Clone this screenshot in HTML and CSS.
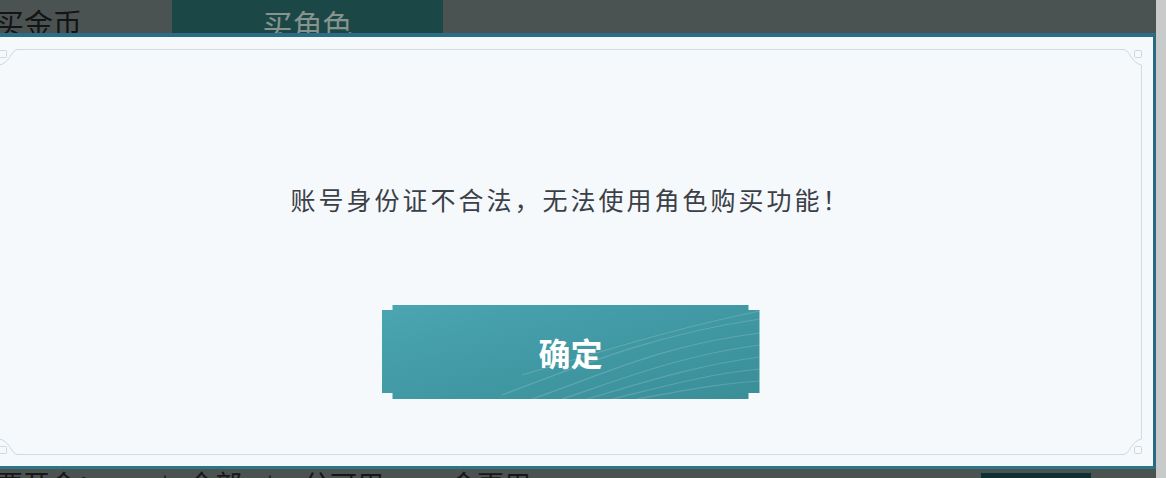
FILE: index.html
```html
<!DOCTYPE html>
<html lang="zh-CN">
<head>
    <meta charset="UTF-8">
    <title>买角色</title>
    <link rel="stylesheet" href="styles.css">
</head>
<body>
    <div class="page">
        <div class="main">
            <div class="tabs">
                <div class="tab">买金币</div>
                <div class="tab tab-active">买角色</div>
            </div>
            <div class="content"></div>
            <div class="filters">
                <span class="filter-label">要开会：</span>
                <span class="sep sep-first">|</span>
                <span class="filter filter-all">全部</span>
                <span class="sep">|</span>
                <span class="filter filter-a">分可用</span>
                <span class="filter filter-b">会更用</span>
                <span class="filter-btn"></span>
            </div>
        </div>
        <div class="scrollbar"></div>

        <div class="dialog">
            <div class="frame">
                <svg class="corner corner-tl" viewBox="0 0 22 18"><path d="M0.5 18 L0.5 16 C5 15 8 12 10.5 8.5 C13 5 15 0.5 19 0.5 L22 0.5"/><rect x="0.5" y="1.5" width="7" height="7" rx="1"/></svg>
                <svg class="corner corner-tr" viewBox="0 0 22 18"><path d="M0.5 18 L0.5 16 C5 15 8 12 10.5 8.5 C13 5 15 0.5 19 0.5 L22 0.5"/><rect x="0.5" y="1.5" width="7" height="7" rx="1"/></svg>
                <svg class="corner corner-bl" viewBox="0 0 22 18"><path d="M0.5 18 L0.5 16 C5 15 8 12 10.5 8.5 C13 5 15 0.5 19 0.5 L22 0.5"/><rect x="0.5" y="1.5" width="7" height="7" rx="1"/></svg>
                <svg class="corner corner-br" viewBox="0 0 22 18"><path d="M0.5 18 L0.5 16 C5 15 8 12 10.5 8.5 C13 5 15 0.5 19 0.5 L22 0.5"/><rect x="0.5" y="1.5" width="7" height="7" rx="1"/></svg>

                <p class="message">账号身份证不合法，无法使用角色购买功能！</p>

                <button class="confirm">
                    <svg class="waves" viewBox="0 0 378 94" preserveAspectRatio="none">
                        <path d="M150 94 C220 70 280 40 378 28"/>
                        <path d="M180 94 C240 74 300 50 378 40"/>
                        <path d="M205 94 C260 78 315 60 378 52"/>
                        <path d="M230 94 C280 82 330 68 378 64"/>
                        <path d="M120 90 C200 60 270 30 378 14"/>
                        <path d="M255 94 C300 86 340 78 378 76"/>
                        <path d="M140 70 C210 50 280 26 378 6"/>
                    </svg>
                    <span class="confirm-label">确定</span>
                </button>
            </div>
        </div>
    </div>
</body>
</html>
```

FILE: styles.css
```css
body {
    margin: 0;
    padding: 0;
    width: 1166px;
    height: 478px;
    overflow: hidden;
    font-family: "Noto Sans CJK SC", "Noto Sans", sans-serif;
}
.page {
    position: relative;
    display: flex;
    width: 1166px;
    height: 478px;
    background: #4b5352;
    overflow: hidden;
}
.main {
    width: 1156px;
    display: flex;
    flex-direction: column;
}
.scrollbar {
    width: 10px;
    background: #c9cbcb;
}
.tabs {
    display: flex;
    height: 33px;
    flex-shrink: 0;
    overflow: hidden;
}
.tab {
    width: 177px;
    margin-left: -5px;
    padding-top: 4px;
    font-size: 29px;
    line-height: 36px;
    color: #141414;
}
.tab-active {
    width: 271px;
    margin-left: 0;
    padding-top: 5px;
    background: #1c4747;
    color: #87938f;
    font-size: 30px;
    text-align: center;
}
.content {
    height: 436px;
    flex-shrink: 0;
}
.filters {
    display: flex;
    align-items: flex-start;
    font-size: 27px;
    line-height: 30px;
    color: #171717;
    white-space: nowrap;
}
.filter-label {
    margin-left: -4px;
    width: 112px;
}
.sep {
    font-size: 22px;
    margin-left: 25px;
}
.sep-first {
    margin-left: 54px;
}
.filter-all {
    margin-left: 20px;
}
.filter-a {
    margin-left: 30px;
}
.filter-b {
    margin-left: 66px;
}
.filter-btn {
    margin-left: 450px;
    margin-top: 4px;
    width: 110px;
    height: 20px;
    background: #0e2f33;
}

.dialog {
    position: absolute;
    left: -13px;
    top: 33px;
    width: 1169px;
    height: 436px;
    box-sizing: border-box;
    border-top: 4px solid #2b6c86;
    border-right: 3px solid #2a6b80;
    border-bottom: 3px solid #2d7784;
    border-left: 3px solid #2b6c86;
    background: #f6f9fc;
    padding: 12px 11px 11px 9px;
}
.frame {
    position: relative;
    height: 100%;
    box-sizing: border-box;
    border: 1px solid #d3dce3;
    display: flex;
    flex-direction: column;
    align-items: center;
}
.corner {
    position: absolute;
    width: 22px;
    height: 18px;
    background: #f6f9fc;
    fill: none;
    stroke: #cdd7de;
    stroke-width: 1;
}
.corner-tl {
    top: -1px;
    left: -1px;
}
.corner-tr {
    top: -1px;
    right: -1px;
    transform: scaleX(-1);
}
.corner-bl {
    bottom: -1px;
    left: -1px;
    transform: scaleY(-1);
}
.corner-br {
    bottom: -1px;
    right: -1px;
    transform: scale(-1, -1);
}
.message {
    margin: 134px 0 0;
    font-size: 25px;
    line-height: 30px;
    letter-spacing: 3px;
    color: #3b4047;
}
.confirm {
    position: relative;
    margin-top: 91px;
    width: 378px;
    height: 94px;
    border: none;
    padding: 0;
    background: linear-gradient(165deg, #4ba6b1 0%, #419aa5 45%, #3a8e98 100%);
    clip-path: polygon(11px 0, calc(100% - 11px) 0, calc(100% - 11px) 5px, 100% 5px, 100% calc(100% - 6px), calc(100% - 11px) calc(100% - 6px), calc(100% - 11px) 100%, 11px 100%, 11px calc(100% - 6px), 0 calc(100% - 6px), 0 5px, 11px 5px);
    cursor: pointer;
    font-family: inherit;
}
.waves {
    position: absolute;
    left: 0;
    top: 0;
    width: 100%;
    height: 100%;
    fill: none;
    stroke: rgba(255, 255, 255, 0.16);
    stroke-width: 1.2;
}
.confirm-label {
    position: relative;
    font-size: 32px;
    font-weight: 700;
    color: #ffffff;
    line-height: 94px;
}
```
